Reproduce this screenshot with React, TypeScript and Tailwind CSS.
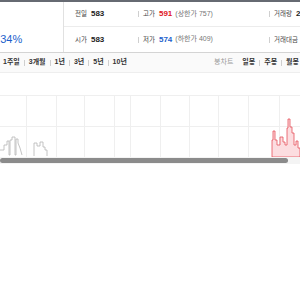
import React from "react";

const F = { fontFamily: '"Liberation Sans", "Noto Sans CJK KR", sans-serif' };

function Sep() {
  return <span className="inline-block w-px h-[6px] bg-[#cfcfcf]" />;
}

function Chart() {
  const vx = [26, 56, 84, 114, 130, 160, 189, 218, 248, 279];
  return (
    <svg width="300" height="84" viewBox="0 73 300 84" className="block">
      <line x1="0" y1="95.5" x2="300" y2="95.5" stroke="#efefef" strokeWidth="1" />
      <line x1="0" y1="126.5" x2="300" y2="126.5" stroke="#efefef" strokeWidth="1" />
      {vx.map((x) => (
        <line key={x} x1={x + 0.5} y1="95" x2={x + 0.5} y2="157" stroke="#efefef" strokeWidth="1" />
      ))}
      <polyline
        points="0,150 4,150 4,145 7,145 7,141 9,141 9,155 10,155 10,140 12,140 12,137 15,137 15,155 16,155 16,139 18,139 18,143 20,148 22,155"
        fill="none"
        stroke="#b5b5b5"
        strokeWidth="0.8"
      />
      <polyline
        points="34,156 34,143 37,143 37,146 40,146 40,142 43,142 43,147 45,147 45,150 47,150 47,156"
        fill="none"
        stroke="#b5b5b5"
        strokeWidth="0.8"
      />
      <polygon
        points="272,157 272,140 273,140 273,131 275,131 275,140 277,140 277,145 280,145 280,137 283,137 283,142 285,142 285,145 287,145 287,128 288,128 288,119 290,119 290,127 292,127 292,133 294,133 294,145 296,145 296,141 298,141 298,148 300,148 300,157"
        fill="#fcdde0"
        stroke="#e6505c"
        strokeWidth="0.8"
      />
    </svg>
  );
}

export default function App() {
  return (
    <div className="w-[300px] h-[300px] overflow-hidden bg-white" style={F}>
      <div className="h-[2px] bg-[#666a72]" />
      <div className="flex h-[51px] border-b border-[#d4d4d4]">
        <div className="w-[64px] shrink-0 border-r border-[#e1e1e1] overflow-hidden">
          <div className="pt-[30px] ml-[-9px] whitespace-nowrap text-[11px] leading-[14px] text-[#1d5fcc]">0.34%</div>
        </div>
        <div className="flex-1 flex flex-col overflow-hidden">
          <div className="h-[25px] flex items-center border-b border-[#ececec] whitespace-nowrap">
            <div className="w-[74px] shrink-0 pl-[11px] flex items-center gap-[4px]">
              <span className="text-[6.5px] text-[#444]">전일</span>
              <span className="text-[8px] font-bold text-[#222]">583</span>
            </div>
            <div className="w-[131px] shrink-0 flex items-center gap-[4px]">
              <Sep />
              <span className="text-[6.5px] text-[#444]">고가</span>
              <span className="text-[8px] font-bold text-[#e0161e]">591</span>
              <span className="text-[7px] text-[#777] ml-[-1px]">(상한가 757)</span>
            </div>
            <div className="flex-1 flex items-center gap-[4px]">
              <Sep />
              <span className="text-[6.5px] text-[#444]">거래량</span>
              <span className="text-[8px] font-bold text-[#222]">2,581,443</span>
            </div>
          </div>
          <div className="h-[25px] flex items-center whitespace-nowrap">
            <div className="w-[74px] shrink-0 pl-[11px] flex items-center gap-[4px]">
              <span className="text-[6.5px] text-[#444]">시가</span>
              <span className="text-[8px] font-bold text-[#222]">583</span>
            </div>
            <div className="w-[131px] shrink-0 flex items-center gap-[4px]">
              <Sep />
              <span className="text-[6.5px] text-[#444]">저가</span>
              <span className="text-[8px] font-bold text-[#1d5fcc]">574</span>
              <span className="text-[7px] text-[#777] ml-[-1px]">(하한가 409)</span>
            </div>
            <div className="flex-1 flex items-center gap-[4px]">
              <Sep />
              <span className="text-[6.5px] text-[#444]">거래대금</span>
              <span className="text-[8px] font-bold text-[#222]">1,503</span>
            </div>
          </div>
        </div>
      </div>
      <div className="h-[20px] flex items-center bg-[#fafafa] border-b border-[#eeeeee] whitespace-nowrap">
        <div className="flex items-center gap-[4px] pl-[3px] text-[7px] font-bold text-[#333]">
          <span>1주일</span>
          <Sep />
          <span>3개월</span>
          <Sep />
          <span>1년</span>
          <Sep />
          <span>3년</span>
          <Sep />
          <span>5년</span>
          <Sep />
          <span>10년</span>
        </div>
        <div className="ml-auto flex items-center gap-[4px] pr-[1px] text-[7px] font-bold text-[#333]">
          <span className="font-normal text-[#9a9a9a] mr-[5px]">봉차트</span>
          <span>일봉</span>
          <Sep />
          <span>주봉</span>
          <Sep />
          <span>월봉</span>
        </div>
      </div>
      <Chart />
      <div className="h-[7px] bg-[#f4f4f4] flex items-center">
        <div className="h-[5px] w-[288px] rounded-full bg-[#8b8b8b]" />
      </div>
    </div>
  );
}
